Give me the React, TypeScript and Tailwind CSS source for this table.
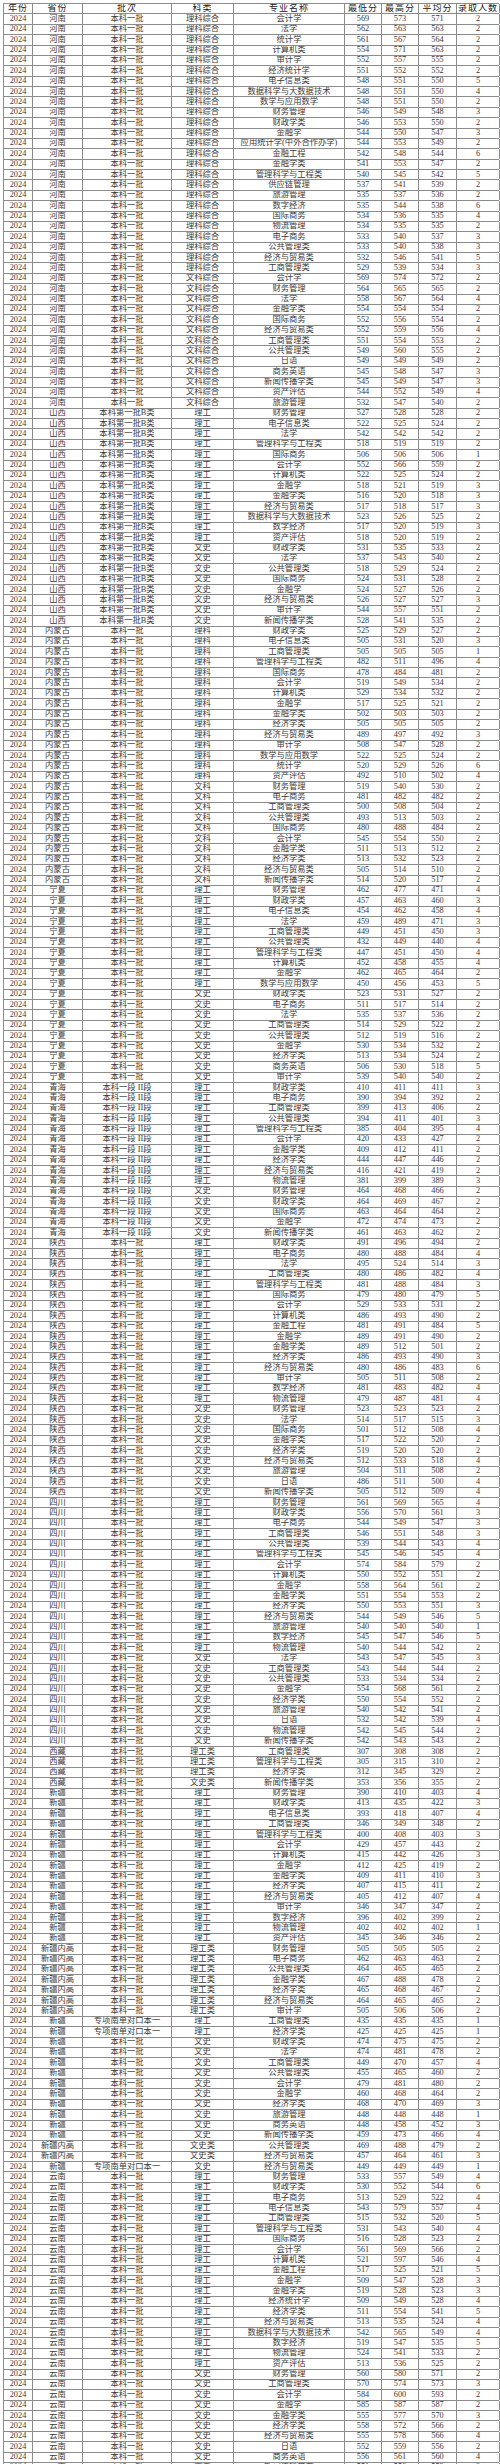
const cols = "grid grid-cols-[29px_50px_89px_62px_111px_37px_37px_38px_43px]";

// 省份, 批次, 科类, "专业 最低 最高 平均 人数|..."
const groups: [string, string, string, string][] = [
  ["河南", "本科一批", "理科综合", "会计学 569 573 571 2|法学 562 563 563 2|统计学 561 567 564 2|计算机类 554 571 563 2|审计学 552 557 555 2|经济统计学 551 552 552 2|电子信息类 548 551 550 5|数据科学与大数据技术 548 551 550 4|数学与应用数学 548 551 550 2|财务管理 546 549 548 3|财政学类 546 553 550 2|金融学 544 550 547 3|应用统计学(中外合作办学) 544 553 549 2|金融工程 542 548 544 6|金融学类 541 553 547 2|管理科学与工程类 540 545 542 5|供应链管理 537 541 539 2|旅游管理 535 537 536 2|数字经济 535 544 538 6|国际商务 534 536 535 4|物流管理 534 535 535 2|电子商务 533 540 537 3|公共管理类 533 540 538 3|经济与贸易类 532 546 541 5|工商管理类 529 539 534 3"],
  ["河南", "本科一批", "文科综合", "会计学 569 574 572 2|财务管理 564 565 565 2|法学 558 567 564 4|金融学类 554 554 554 2|国际商务 552 556 554 2|经济与贸易类 552 559 556 4|工商管理类 551 554 553 2|公共管理类 549 560 555 2|日语 549 549 549 2|商务英语 545 548 547 3|新闻传播学类 545 549 547 3|资产评估 544 552 549 4|旅游管理 532 547 540 2"],
  ["山西", "本科第一批B类", "理工", "财务管理 527 528 528 2|电子信息类 522 525 524 2|法学 542 542 542 2|管理科学与工程类 518 519 519 2|国际商务 506 506 506 1|会计学 552 566 559 2|计算机类 522 525 524 2|金融学 518 521 519 3|金融学类 516 520 518 3|经济与贸易类 517 518 517 3|数据科学与大数据技术 523 526 525 2|数字经济 517 520 519 3|资产评估 518 520 519 2"],
  ["山西", "本科第一批B类", "文史", "财政学类 531 535 533 2|法学 537 543 540 2|公共管理类 518 529 524 2|国际商务 524 531 528 2|金融学 524 527 526 2|经济与贸易类 526 527 527 3|审计学 544 557 551 2|新闻传播学类 528 541 535 2"],
  ["内蒙古", "本科一批", "理科", "财政学类 525 529 527 2|电子信息类 505 531 520 3|工商管理类 505 505 505 1|管理科学与工程类 482 511 496 4|国际商务 478 484 481 2|会计学 519 549 534 2|计算机类 529 534 532 2|金融学 517 525 521 2|金融学类 502 503 503 2|经济学类 505 505 505 2|经济与贸易类 489 497 492 3|审计学 508 547 528 2|数学与应用数学 522 525 524 2|统计学 520 529 526 6|资产评估 492 510 502 4"],
  ["内蒙古", "本科一批", "文科", "财务管理 519 540 530 2|电子商务 481 482 482 2|工商管理类 500 508 504 2|公共管理类 493 513 503 2|国际商务 480 488 484 2|会计学 545 554 550 2|金融学类 511 513 512 2|经济学类 513 532 523 2|经济与贸易类 505 514 510 2|新闻传播学类 514 520 517 2"],
  ["宁夏", "本科一批", "理工", "财务管理 462 477 471 4|财政学类 457 463 460 3|电子信息类 454 462 458 4|法学 459 489 471 3|工商管理类 449 451 450 3|公共管理类 432 449 440 4|管理科学与工程类 447 451 450 4|计算机类 452 458 455 4|金融学 462 465 464 2|数学与应用数学 450 456 453 5"],
  ["宁夏", "本科一批", "文史", "财政学类 523 531 527 2|电子商务 511 517 514 2|法学 535 537 536 2|工商管理类 514 529 522 2|公共管理类 512 519 516 2|金融学 530 534 532 2|经济学类 513 534 524 2|商务英语 506 530 518 5|审计学 539 540 540 2"],
  ["青海", "本科一段 II段", "理工", "财政学类 410 411 411 3|电子商务 390 394 392 2|工商管理类 399 413 406 2|公共管理类 394 411 401 3|管理科学与工程类 385 404 395 4|会计学 420 433 427 2|金融学类 409 412 411 2|经济学类 444 447 446 2|经济与贸易类 416 421 419 2|物流管理 381 399 389 3"],
  ["青海", "本科一段 II段", "文史", "财务管理 464 468 466 2|财政学类 464 469 467 2|国际商务 463 464 464 2|金融学 472 474 473 2|新闻传播学类 461 463 462 2"],
  ["陕西", "本科一批", "理工", "财政学类 491 496 494 2|电子商务 480 488 484 4|法学 495 524 514 3|工商管理类 480 486 482 4|管理科学与工程类 481 488 484 3|国际商务 479 480 479 5|会计学 529 533 531 2|计算机类 486 493 490 2|金融工程 481 491 484 5|金融学 489 491 490 2|金融学类 489 512 501 2|经济学类 486 493 490 3|经济与贸易类 480 486 483 6|审计学 505 511 508 2|数字经济 481 483 482 4|物流管理 479 487 481 4"],
  ["陕西", "本科一批", "文史", "财务管理 523 523 523 2|法学 514 517 515 3|国际商务 501 512 508 4|金融学类 517 522 520 2|经济学类 519 520 520 2|经济与贸易类 512 533 518 4|旅游管理 504 511 508 2|日语 486 511 500 4|新闻传播学类 505 512 509 4"],
  ["四川", "本科一批", "理工", "财务管理 561 569 565 4|财政学类 556 570 561 3|电子商务 544 549 547 3|工商管理类 546 551 548 3|公共管理类 539 544 543 4|管理科学与工程类 545 546 545 4|会计学 574 584 579 2|计算机类 550 552 551 2|金融学 558 564 561 2|金融学类 551 554 553 2|经济学类 550 553 551 3|经济与贸易类 544 549 546 5|旅游管理 540 540 540 1|数字经济 545 547 546 5|物流管理 540 544 542 2"],
  ["四川", "本科一批", "文史", "法学 543 547 545 3|工商管理类 543 544 544 2|公共管理类 533 534 534 2|金融学 554 568 561 2|经济学类 550 554 552 2|旅游管理 540 542 541 2|日语 532 542 539 4|物流管理 542 545 544 2|新闻传播学类 542 543 543 2"],
  ["西藏", "本科一批", "理工类", "工商管理类 307 308 308 2|管理科学与工程类 305 315 310 2|经济学类 312 345 329 2"],
  ["西藏", "本科一批", "文史类", "新闻传播学类 353 356 355 2"],
  ["新疆", "本科一批", "理工", "财务管理 390 410 403 4|财政学类 413 435 422 3|电子信息类 393 418 407 4|工商管理类 346 349 348 2|管理科学与工程类 400 408 403 3|会计学 429 457 443 2|计算机类 415 442 426 3|金融学 412 425 419 2|金融学类 409 411 410 3|经济学类 407 415 411 2|经济与贸易类 405 412 407 4|审计学 346 347 347 2|数字经济 396 402 399 2|物流管理 402 402 402 1|资产评估 345 346 346 2"],
  ["新疆内高", "本科一批", "理工类", "财务管理 505 505 505 2|电子商务 462 463 463 2|公共管理类 464 465 465 2|金融学类 467 488 478 2|经济学类 465 468 467 2|经济与贸易类 464 465 465 2|审计学 505 506 506 2"],
  ["新疆", "专项南单对口本一", "理工", "工商管理类 435 435 435 1|经济学类 425 425 425 1"],
  ["新疆", "本科一批", "文史", "财政学类 474 475 475 2|法学 474 481 478 2|工商管理类 449 470 457 4|公共管理类 455 465 460 2|会计学 479 481 480 2|金融学 460 468 464 2|经济学类 468 470 469 3|旅游管理 448 448 448 1|商务英语 448 458 452 3|新闻传播学类 459 473 466 4"],
  ["新疆内高", "本科一批", "文史类", "公共管理类 469 488 479 2|经济与贸易类 457 464 461 3"],
  ["新疆", "专项南单对口本一", "文史", "经济与贸易类 449 449 449 1"],
  ["云南", "本科一批", "理工", "财务管理 533 557 549 4|财政学类 530 552 544 6|电子商务 513 529 522 4|电子信息类 543 579 557 4|工商管理类 515 532 520 5|管理科学与工程类 531 543 540 4|国际商务 516 528 523 2|会计学 561 569 566 2|计算机类 521 597 546 4|金融工程 517 525 521 5|金融学 509 547 528 3|金融学类 519 528 523 3|经济统计学 509 549 528 4|经济学类 511 554 541 5|经济与贸易类 513 535 524 4|数据科学与大数据技术 542 565 549 4|数字经济 519 547 535 5|物流管理 524 541 533 2|资产评估 513 536 525 2"],
  ["云南", "本科一批", "文史", "财务管理 560 580 571 2|工商管理类 570 574 573 3|会计学 584 600 593 2|金融学 585 587 587 2|金融学类 555 577 570 3|经济学类 558 572 566 2|经济与贸易类 555 578 566 4|日语 552 559 556 2|商务英语 556 561 560 4|新闻传播学类 551 556 553 2"],
];

const rows = groups.flatMap(([prov, batch, subj, list]) =>
  list.split("|").map((item) => {
    const [major, lo, hi, avg, n] = item.split(" ");
    return ["2024", prov, batch, subj, major, lo, hi, avg, n];
  })
);

const header = ["年份", "省份", "批次", "科类", "专业名称", "最低分", "最高分", "平均分", "录取人数"];

const Row = ({ cells, head }: { cells: string[]; head?: boolean }) => (
  <div className={`${cols} h-[10.375px] border-b border-[#8c8c8c]`}>
    {cells.map((c, i) => (
      <div
        key={i}
        className={`flex items-center justify-center overflow-hidden whitespace-nowrap border-r border-[#8c8c8c] leading-none ${
          head ? "text-[9px] tracking-[1px] text-[#222]" : "text-[8.3px] text-[#3a3a3a]"
        }`}
      >
        {c}
      </div>
    ))}
  </div>
);

export default function App() {
  return (
    <div
      className="h-[2464px] w-[500px] overflow-hidden bg-white pl-[3px] pt-[3px]"
      style={{ fontFamily: '"Liberation Serif", "Noto Sans CJK SC", serif' }}
    >
      <div className="w-[496px] border-l border-t border-[#8c8c8c]">
        <Row cells={header} head />
        {rows.map((r, i) => (
          <Row key={i} cells={r} />
        ))}
      </div>
    </div>
  );
}
